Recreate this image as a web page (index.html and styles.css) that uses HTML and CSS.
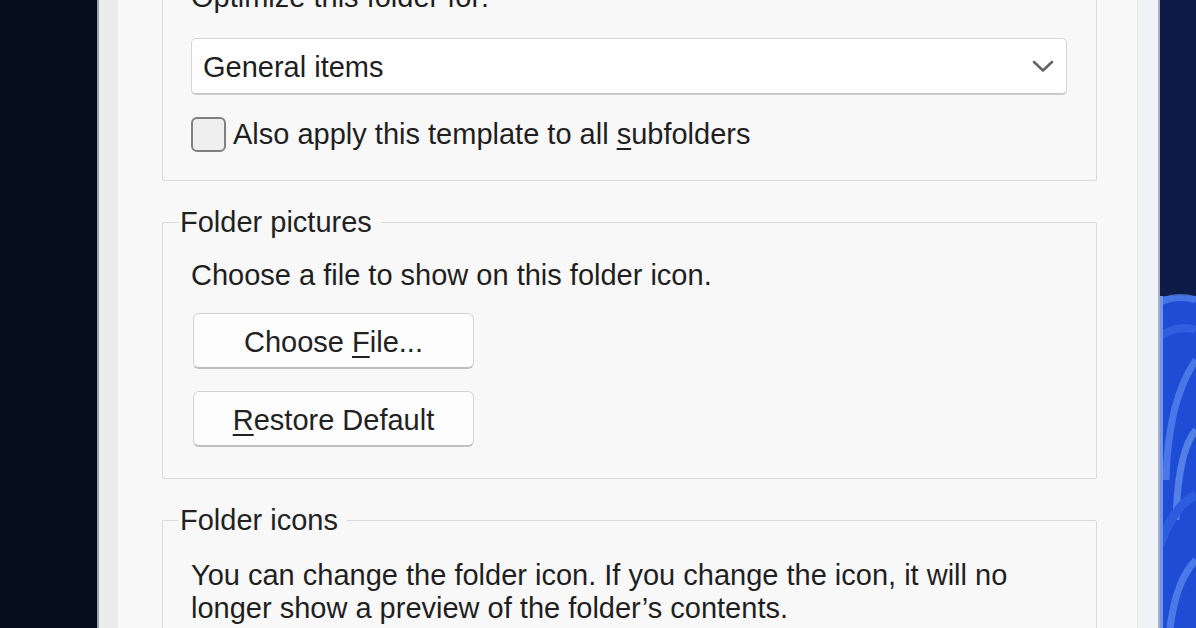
FILE: index.html
```html
<!DOCTYPE html>
<html lang="en">
<head>
<meta charset="utf-8">
<title>Folder Properties – Customize</title>
<link rel="stylesheet" href="styles.css">
</head>
<body>
<div class="screen">
  <div class="desk-left"></div>
  <div class="window">
    <div class="page">
      <section class="group group-top">
        <div class="caption">Optimize this folder for:</div>
        <div class="combo">
          <span class="combo-text">General items</span>
          <svg class="chev" width="22" height="13" viewBox="0 0 22 13"><path d="M2 2 L11 10.5 L20 2" fill="none" stroke="#666" stroke-width="2.6" stroke-linecap="round" stroke-linejoin="round"/></svg>
        </div>
        <label class="check-row">
          <span class="checkbox"></span>
          <span class="check-label">Also apply this template to all <u>s</u>ubfolders</span>
        </label>
      </section>

      <fieldset class="group">
        <legend>Folder pictures</legend>
        <p class="text">Choose a file to show on this folder icon.</p>
        <div class="buttons">
          <button class="btn">Choose <u>F</u>ile...</button>
          <button class="btn"><u>R</u>estore Default</button>
        </div>
      </fieldset>

      <fieldset class="group group-last">
        <legend>Folder icons</legend>
        <p class="text text-last">You can change the folder icon. If you change the icon, it will no<br>longer show a preview of the folder’s contents.</p>
      </fieldset>
    </div>
  </div>
  <div class="desk-right">
    <svg width="36" height="628" viewBox="0 0 36 628" preserveAspectRatio="none">
      <rect x="0" y="0" width="36" height="628" fill="#0c1b47"/>
      <rect x="0" y="296" width="36" height="332" fill="#1f4cd4"/>
      <path d="M0 302 Q18 294 36 300" stroke="#4f7ee8" stroke-width="7" fill="none" opacity="0.8"/>
      <path d="M0 336 Q20 324 36 330" stroke="#2f5fe0" stroke-width="8" fill="none"/>
      <path d="M36 360 Q8 400 6 480" stroke="#5482ec" stroke-width="7" fill="none" opacity="0.8"/>
      <path d="M36 430 Q18 450 16 520" stroke="#6690ee" stroke-width="7" fill="none" opacity="0.75"/>
      <path d="M0 545 Q14 505 36 495" stroke="#2c5ce0" stroke-width="9" fill="none"/>
      <path d="M10 628 Q16 580 36 560" stroke="#5884ec" stroke-width="7" fill="none" opacity="0.8"/>
      <rect x="0" y="296" width="3" height="332" fill="#6f96ee"/>
    </svg>
  </div>
</div>
</body>
</html>
```

FILE: styles.css
```css
* { box-sizing: border-box; }

html, body {
  margin: 0;
  padding: 0;
  width: 1196px;
  height: 628px;
  overflow: hidden;
  background: #050c1a;
}

.screen {
  display: flex;
  width: 1196px;
  height: 628px;
  font-family: "Liberation Sans", Arial, sans-serif;
  font-size: 29px;
  line-height: 33px;
  color: #1f1f1f;
}

.desk-left {
  width: 97px;
  flex: none;
  background: #050c1a;
}

.window {
  flex: none;
  width: 1063px;
  display: flex;
  background: #ebebeb;
  border-left: 2px solid #9ea3ab;
  border-right: 2px solid #a9afbb;
  padding-left: 19px;
}

.page {
  flex: none;
  width: 1020px;
  height: 628px;
  background: #f8f8f8;
  border-right: 1px solid #e6e6e6;
  padding: 0 40px 0 44px;
  box-shadow: 20px 0 0 #f1f2f7;
  display: flex;
  flex-direction: column;
}

.group {
  margin: 0;
  border: 1px solid #dadada;
  border-radius: 2px;
  padding: 0 0 0 16px;
  min-width: 0;
}

.group-top {
  border-top: none;
  margin-top: -1px;
  padding: 0 0 28px 28px;
}

.caption {
  margin-top: -18px;
}

.combo {
  margin-top: 24px;
  width: 876px;
  height: 57px;
  background: #fefefe;
  border: 1px solid #d6d6d6;
  border-bottom: 2px solid #c9c9c9;
  border-radius: 5px;
  display: flex;
  align-items: center;
  justify-content: space-between;
  padding: 3px 12px 0 11px;
}

.chev { display: block; margin-top: -2px; }

.check-row {
  margin-top: 22px;
  display: flex;
  align-items: center;
  gap: 7px;
  height: 35px;
}

.checkbox {
  width: 35px;
  height: 35px;
  border: 2px solid #808080;
  border-radius: 6px;
  background: #efefef;
  flex: none;
}

u {
  text-decoration: underline;
  text-decoration-thickness: 2px;
  text-underline-offset: 4px;
}

fieldset.group {
  margin-top: 25px;
  padding-bottom: 31px;
}

legend {
  padding: 0 9px 0 1px;
  margin-left: 0;
  color: #222;
}

.text {
  margin: 20px 0 0 12px;
}

.text-last {
  margin-top: 22px;
}

.buttons {
  margin: 21px 0 0 14px;
  display: flex;
  flex-direction: column;
  gap: 22px;
}

.btn {
  width: 281px;
  height: 56px;
  font-family: inherit;
  font-size: 29px;
  line-height: 33px;
  color: #222;
  background: #fdfdfd;
  border: 1px solid #d3d3d3;
  border-bottom: 2px solid #bfbfbf;
  border-radius: 6px;
  padding: 3px 0 0;
}

.group-last {
  flex: 1;
}

.desk-right {
  flex: 1;
  background: #0c1b47;
}

.desk-right svg { display: block; }
```
